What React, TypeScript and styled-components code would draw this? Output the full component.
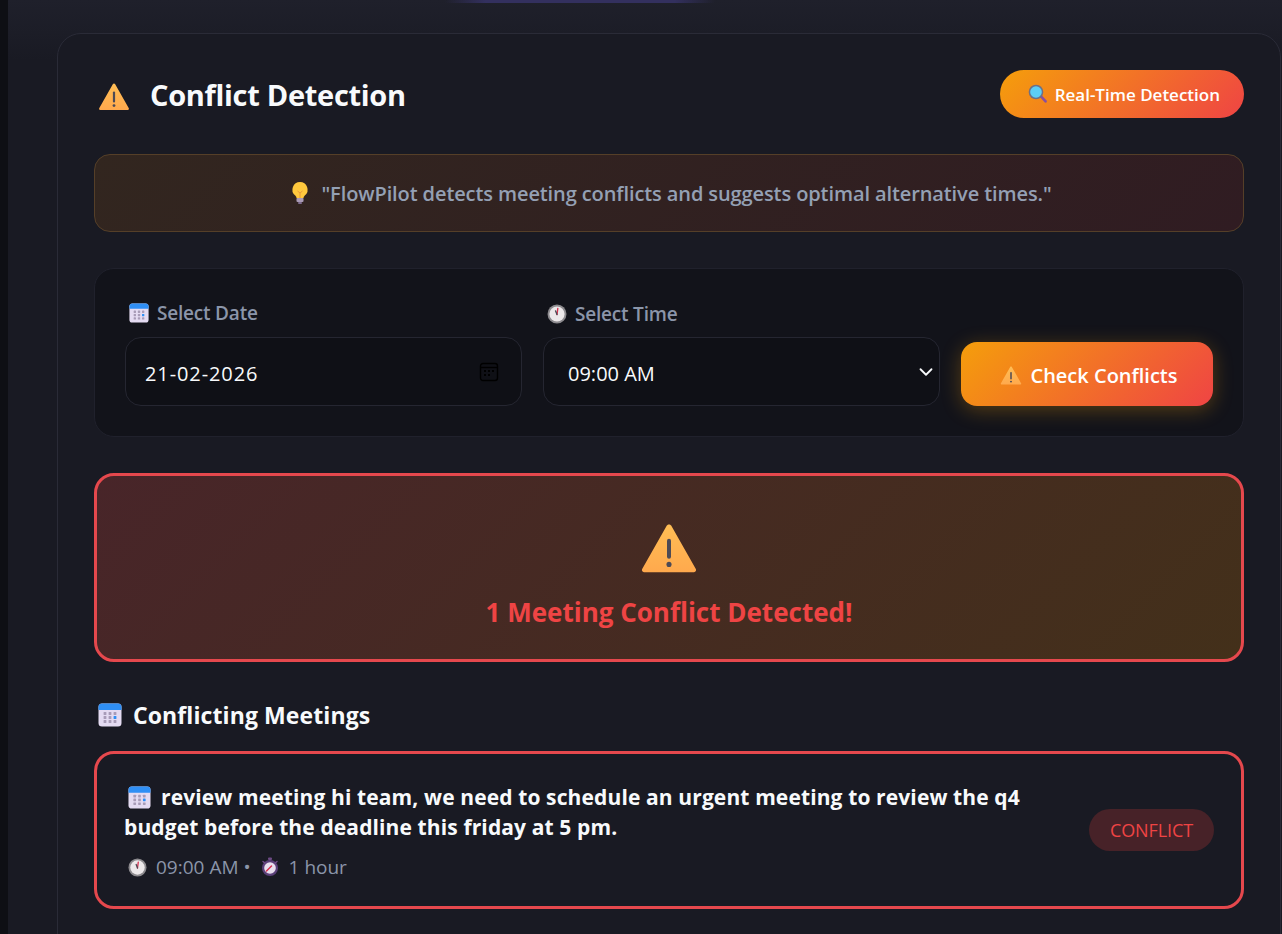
import React from "react";
import styled, { createGlobalStyle } from "styled-components";
import { ChevronDown } from "lucide-react";

const GlobalStyle = createGlobalStyle`
  html, body {
    margin: 0;
    height: 100%;
    overflow: hidden;
    background: #191a23;
  }
  * {
    box-sizing: border-box;
  }
  body {
    font-family: "Open Sans", "Noto Sans", sans-serif;
  }
`;

const Shell = styled.div`
  display: flex;
  height: 934px;
  overflow: hidden;
  background: #191a23;
`;

const SideStrip = styled.div`
  width: 8px;
  flex: none;
  background: #0e0f14;
`;

const Main = styled.main`
  position: relative;
  flex: 1;
  min-width: 0;
  padding: 33px 0 0 49px;
  background: linear-gradient(180deg, #1f202b 0, #1c1d27 33px, #191a23 60px);
`;

const TopGlow = styled.div`
  position: absolute;
  top: 0;
  left: 437px;
  width: 270px;
  height: 3px;
  background: linear-gradient(90deg, transparent, #33305f 15%, #33305f 85%, transparent);
`;

const Card = styled.section`
  width: 1224px;
  min-height: 1000px;
  padding: 36px 36px 0;
  background: #191a23;
  border: 1px solid #2a2b37;
  border-radius: 24px;
`;

const Header = styled.header`
  display: flex;
  align-items: center;
  justify-content: space-between;
  height: 48px;
  margin-bottom: 36px;
`;

const Title = styled.h2`
  display: flex;
  align-items: center;
  gap: 20px;
  margin: 1px 0 0 4px;
  font-size: 29px;
  font-weight: 700;
  letter-spacing: -0.3px;
  color: #f8fafc;
  svg {
    margin-top: 2px;
  }
`;

const Pill = styled.div`
  display: flex;
  align-items: center;
  gap: 7px;
  height: 48px;
  padding: 0 24px 0 28px;
  border-radius: 24px;
  background: linear-gradient(135deg, #f59e0b, #ef4444);
  color: #fff;
  font-size: 17px;
  font-weight: 600;
`;

const Quote = styled.div`
  display: flex;
  align-items: center;
  justify-content: center;
  gap: 11px;
  height: 78px;
  margin-bottom: 36px;
  background: linear-gradient(135deg, #32261f, #301c22);
  border: 1px solid #553f28;
  border-radius: 16px;
  color: #94a0b4;
  font-size: 20px;
  font-weight: 600;
  letter-spacing: -0.1px;
  svg {
    margin-left: 4px;
  }
`;

const FormPanel = styled.div`
  display: flex;
  align-items: flex-end;
  gap: 21px;
  height: 169px;
  padding: 0 30px 30px;
  margin-bottom: 36px;
  background: #12131a;
  border: 1px solid #20212c;
  border-radius: 20px;
`;

const Field = styled.div<{ $gap: number }>`
  display: flex;
  flex-direction: column;
  gap: ${(p) => p.$gap}px;
  width: 397px;
`;

const FieldLabel = styled.label`
  display: flex;
  align-items: center;
  gap: 8px;
  padding-left: 4px;
  font-size: 19px;
  font-weight: 600;
  letter-spacing: -0.2px;
  color: #8b95a9;
`;

const InputBox = styled.div<{ $left: number; $right: number }>`
  display: flex;
  align-items: center;
  justify-content: space-between;
  height: 69px;
  padding: 0 ${(p) => p.$right}px 0 ${(p) => p.$left}px;
  background: #0f1016;
  border: 1px solid #252631;
  border-radius: 16px;
  color: #f8fafc;
  font-size: 20px;
`;

const InputValue = styled.span<{ $spacing?: number }>`
  padding-top: 4px;
  letter-spacing: ${(p) => p.$spacing ?? 0}px;
`;

const CheckButton = styled.button`
  display: flex;
  align-items: center;
  justify-content: center;
  gap: 8px;
  width: 252px;
  height: 64px;
  padding: 2px 0 0 4px;
  border: none;
  border-radius: 16px;
  background: linear-gradient(135deg, #f59e0b, #ef4444);
  box-shadow: 0 4px 20px rgba(245, 158, 11, 0.3);
  color: #fff;
  font-family: inherit;
  font-size: 20px;
  font-weight: 600;
`;

const AlertBox = styled.div`
  display: flex;
  flex-direction: column;
  align-items: center;
  height: 189px;
  padding-top: 42px;
  margin-bottom: 37px;
  background: linear-gradient(135deg, #482529, #43301a);
  border: 3px solid #e5484d;
  border-radius: 20px;
`;

const AlertText = styled.h3`
  margin: 18px 0 0;
  font-size: 26px;
  font-weight: 700;
  color: #ef4444;
`;

const SectionTitle = styled.h3`
  display: flex;
  align-items: center;
  gap: 11px;
  margin: 0 0 20px 4px;
  font-size: 23px;
  font-weight: 700;
  letter-spacing: 0.1px;
  color: #f8fafc;
`;

const MeetingCard = styled.article`
  display: flex;
  align-items: center;
  justify-content: space-between;
  height: 158px;
  padding: 0 27px;
  border: 3px solid #e5484d;
  border-radius: 20px;
`;

const MeetingBody = styled.div`
  width: 920px;
`;

const MeetingTitle = styled.div`
  font-size: 21px;
  font-weight: 700;
  line-height: 30px;
  letter-spacing: 0.12px;
  color: #f8fafc;
  svg {
    vertical-align: -4px;
    margin: 0 10px 0 4px;
  }
`;

const MeetingMeta = styled.div`
  display: flex;
  align-items: center;
  gap: 9px;
  height: 22px;
  margin: 14px 0 0 4px;
  font-size: 19px;
  color: #8b95a9;
`;

const Badge = styled.span`
  display: flex;
  align-items: center;
  justify-content: center;
  width: 125px;
  height: 42px;
  border-radius: 21px;
  background: #472228;
  color: #ef4444;
  font-size: 18px;
  font-weight: 500;
  letter-spacing: -0.1px;
`;

const WarningIcon: React.FC<{ size: number }> = ({ size }) => (
  <svg width={size} height={size} viewBox="0 0 32 32">
    <defs>
      <linearGradient id="warn" x1="0" y1="0" x2="0" y2="1">
        <stop offset="0" stopColor="#ffbe55" />
        <stop offset="1" stopColor="#ffa94d" />
      </linearGradient>
    </defs>
    <path
      d="M14.8 4.2c.5-.9 1.9-.9 2.4 0l13.6 24c.4.8-.1 1.7-1 1.7H2.2c-.9 0-1.4-.9-1-1.7z"
      fill="url(#warn)"
    />
    <rect x="14.9" y="11.5" width="2.2" height="11" rx="1.1" fill="#4d4a55" />
    <circle cx="16" cy="25.6" r="1.4" fill="#4d4a55" />
  </svg>
);

const BulbIcon: React.FC = () => (
  <svg width={20} height={24} viewBox="0 0 20 24">
    <path d="M10 1a7.6 7.6 0 0 0-5 13.3c1 1 1.5 1.9 1.6 3h6.8c.1-1.1.6-2 1.6-3A7.6 7.6 0 0 0 10 1z" fill="#ffc83d" />
    <path d="M7.5 10l2.5 2 2.5-2M10 12v5" stroke="#e8973a" strokeWidth="1" fill="none" />
    <rect x="6.5" y="17" width="7" height="4" rx="1" fill="#a99ab5" />
    <rect x="8" y="21" width="4" height="2" rx="1" fill="#7d6a8c" />
  </svg>
);

const SearchIcon: React.FC = () => (
  <svg width={20} height={20} viewBox="0 0 20 20">
    <path d="M11 12l2-1.6 5.6 6.2c.5.7.3 1.4-.2 1.8-.6.4-1.3.4-1.8-.2z" fill="#8a4f9e" />
    <circle cx="8" cy="8" r="7.3" fill="#6d6f86" />
    <circle cx="8" cy="8" r="5.8" fill="#5ccdf5" />
  </svg>
);

const CalendarIcon: React.FC<{ size: number }> = ({ size }) => (
  <svg width={size} height={size} viewBox="0 0 24 24">
    <rect x="0.5" y="0.5" width="23" height="23" rx="3.5" fill="#e4dbf2" />
    <path d="M0.5 7V4A3.5 3.5 0 0 1 4 0.5h16A3.5 3.5 0 0 1 23.5 4V7z" fill="#2f8ff5" />
    {[7, 12, 17].map((x) =>
      [10.5, 14.5, 18.5].map((y) => (
        <rect
          key={`${x}-${y}`}
          x={x - 1.4}
          y={y - 1.4}
          width="2.8"
          height="2.8"
          rx="0.5"
          fill={x === 17 && y === 14.5 ? "#2f8ff5" : "#a89cb8"}
        />
      ))
    )}
  </svg>
);

const ClockIcon: React.FC<{ size: number }> = ({ size }) => (
  <svg width={size} height={size} viewBox="0 0 20 20">
    <circle cx="10" cy="10" r="9.5" fill="#8c8a8e" />
    <circle cx="10" cy="10" r="7.6" fill="#ece8ea" />
    <path d="M10 10.5l.8-6" stroke="#d6304f" strokeWidth="1.4" strokeLinecap="round" />
    <path d="M10 10.5l-1.4-3.6" stroke="#4d4a55" strokeWidth="1.4" strokeLinecap="round" />
  </svg>
);

const StopwatchIcon: React.FC = () => (
  <svg width={20} height={20} viewBox="0 0 20 20">
    <rect x="8" y="0.5" width="4" height="2.5" rx="1" fill="#6d4a85" />
    <circle cx="10" cy="11" r="8" fill="#5a3f78" />
    <circle cx="10" cy="11" r="5.8" fill="#e8dfee" />
    <path d="M6.5 14l5-5" stroke="#d6304f" strokeWidth="1.5" strokeLinecap="round" />
    <path d="M3 4.5l2 1.6M17 4.5l-2 1.6" stroke="#6d4a85" strokeWidth="1.5" strokeLinecap="round" />
  </svg>
);

const DateGlyph: React.FC = () => (
  <svg width={20} height={20} viewBox="0 0 20 20" fill="none" stroke="#000">
    <rect x="1.5" y="1.5" width="17" height="17" rx="2.5" strokeWidth="1.4" />
    <path d="M1.5 5.5h17" strokeWidth="1.4" />
    <path d="M5 9h2M9 9h2M13 9h2M5 13h2M9 13h2" strokeWidth="2" />
  </svg>
);

const App: React.FC = () => {
  return (
    <Shell>
      <GlobalStyle />
      <SideStrip />
      <Main>
        <TopGlow />
        <Card>
          <Header>
            <Title>
              <WarningIcon size={32} />
              Conflict Detection
            </Title>
            <Pill>
              <SearchIcon />
              Real-Time Detection
            </Pill>
          </Header>

          <Quote>
            <BulbIcon />
            "FlowPilot detects meeting conflicts and suggests optimal alternative times."
          </Quote>

          <FormPanel>
            <Field $gap={11}>
              <FieldLabel>
                <CalendarIcon size={20} />
                Select Date
              </FieldLabel>
              <InputBox $left={19} $right={22}>
                <InputValue $spacing={0.9}>21-02-2026</InputValue>
                <DateGlyph />
              </InputBox>
            </Field>
            <Field $gap={10}>
              <FieldLabel>
                <ClockIcon size={20} />
                Select Time
              </FieldLabel>
              <InputBox $left={24} $right={2}>
                <InputValue>09:00 AM</InputValue>
                <ChevronDown size={22} color="#f8fafc" strokeWidth={2} />
              </InputBox>
            </Field>
            <CheckButton>
              <WarningIcon size={22} />
              Check Conflicts
            </CheckButton>
          </FormPanel>

          <AlertBox>
            <WarningIcon size={58} />
            <AlertText>1 Meeting Conflict Detected!</AlertText>
          </AlertBox>

          <SectionTitle>
            <CalendarIcon size={24} />
            Conflicting Meetings
          </SectionTitle>

          <MeetingCard>
            <MeetingBody>
              <MeetingTitle>
                <CalendarIcon size={23} />
                review meeting hi team, we need to schedule an urgent meeting to review the q4 budget before the deadline this friday at 5 pm.
              </MeetingTitle>
              <MeetingMeta>
                <ClockIcon size={19} />
                09:00 AM •
                <StopwatchIcon />
                1 hour
              </MeetingMeta>
            </MeetingBody>
            <Badge>CONFLICT</Badge>
          </MeetingCard>
        </Card>
      </Main>
    </Shell>
  );
};

export default App;
